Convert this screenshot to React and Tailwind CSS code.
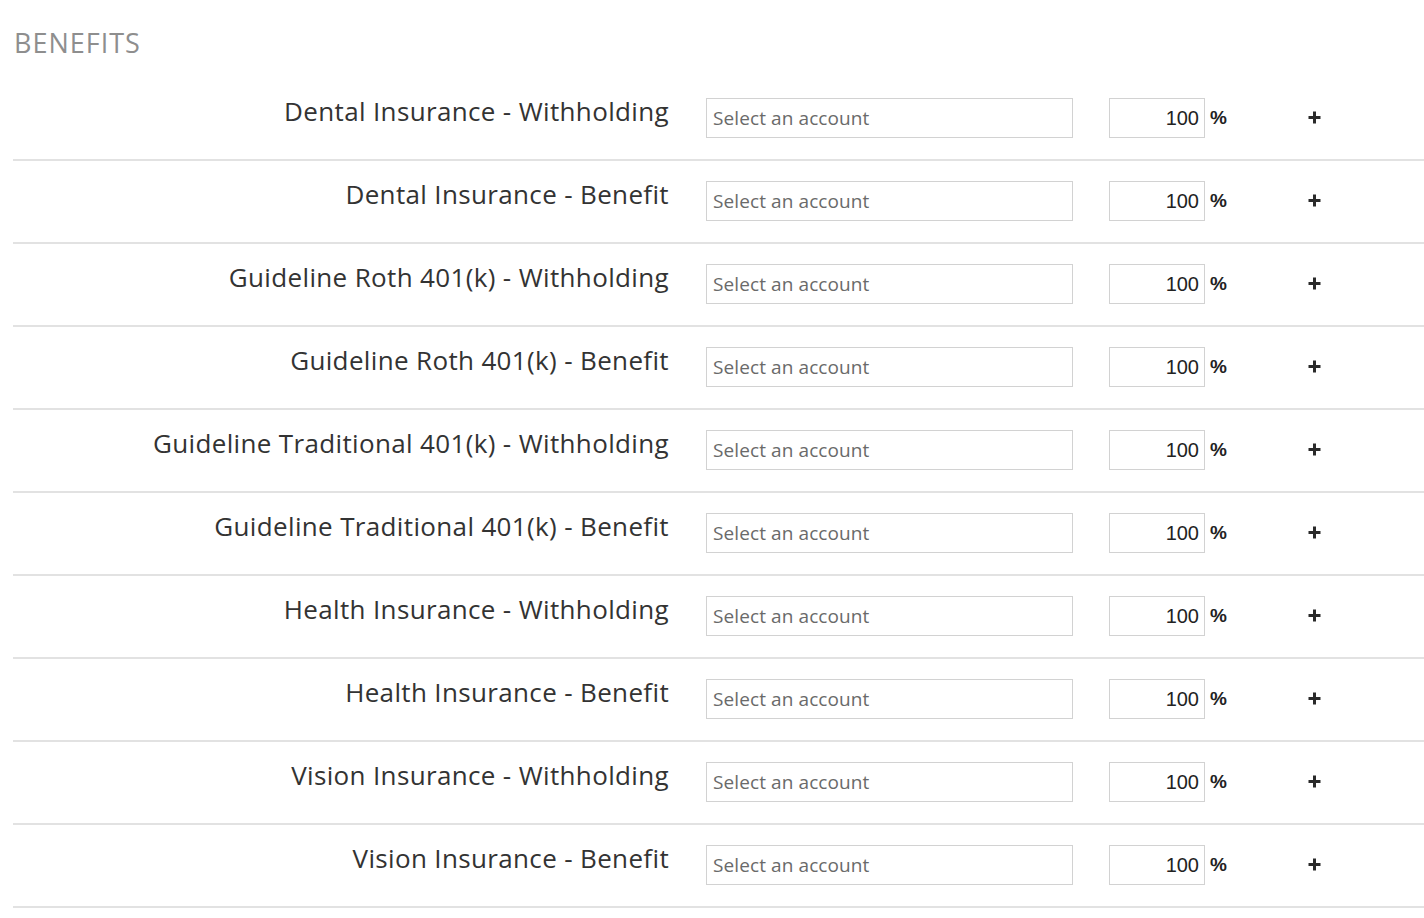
const rows = [
  "Dental Insurance - Withholding",
  "Dental Insurance - Benefit",
  "Guideline Roth 401(k) - Withholding",
  "Guideline Roth 401(k) - Benefit",
  "Guideline Traditional 401(k) - Withholding",
  "Guideline Traditional 401(k) - Benefit",
  "Health Insurance - Withholding",
  "Health Insurance - Benefit",
  "Vision Insurance - Withholding",
  "Vision Insurance - Benefit",
];

function PlusIcon() {
  return (
    <svg width="13" height="13" viewBox="0 0 13 13" className="block">
      <rect x="5" y="0.5" width="3" height="12" fill="#2a2a2a" />
      <rect x="0.5" y="5" width="12" height="3" fill="#2a2a2a" />
    </svg>
  );
}

export default function App() {
  return (
    <div className="min-h-[918px] bg-white pl-[13px]" style={{ fontFamily: '"Open Sans", sans-serif' }}>
      <div className="pt-[27px] pl-px text-[27px] leading-[32px] text-[#8e8e8e] tracking-[1px]">BENEFITS</div>
      <div className="mt-[19px]">
        {rows.map((r) => (
          <div key={r} className="flex items-start h-[83px] border-b-2 border-[#e2e2e2]">
            <div className="w-[656px] pt-[15px] text-right text-[26px] leading-[36px] text-[#333] tracking-[0.35px]">{r}</div>
            <div className="ml-[37px] mt-[20px] w-[367px] h-[40px] border border-[#d2d2d2] flex items-center pl-[6px] text-[19px] text-[#6a6a6a] tracking-[0.1px]">
              Select an account
            </div>
            <div className="ml-[36px] mt-[20px] w-[96px] h-[40px] border border-[#d2d2d2] flex items-center justify-end pr-[5px] text-[20px] text-[#222]" style={{ fontFamily: '"Liberation Sans", Arial, sans-serif' }}>
              100
            </div>
            <div className="ml-[5px] mt-[28px] text-[19px] leading-[24px] font-bold text-[#222]" style={{ fontFamily: '"Liberation Sans", Arial, sans-serif' }}>%</div>
            <div className="ml-[81px] mt-[33px]"><PlusIcon /></div>
          </div>
        ))}
      </div>
    </div>
  );
}
